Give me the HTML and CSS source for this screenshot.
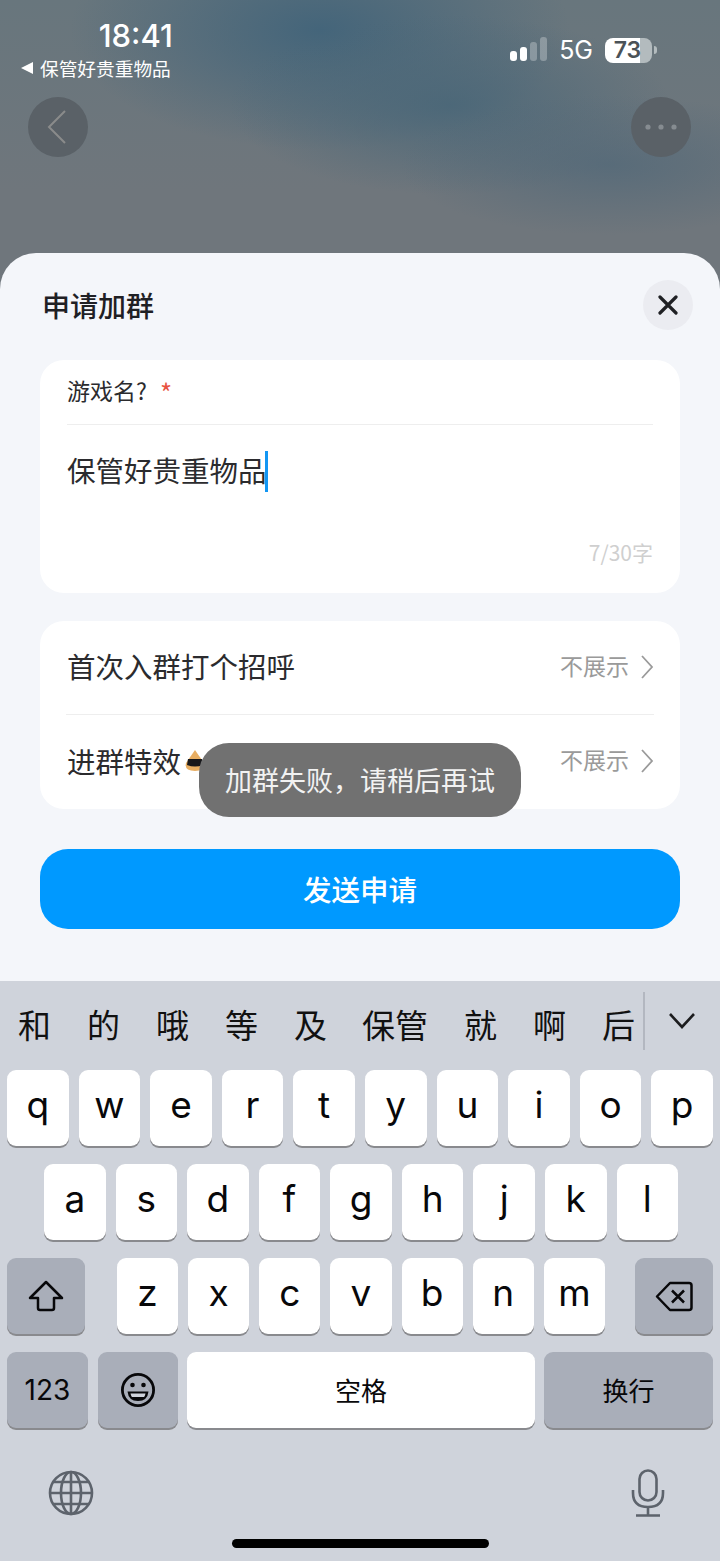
FILE: index.html
```html
<!DOCTYPE html>
<html lang="zh-CN">
<head>
    <meta charset="UTF-8">
    <meta name="viewport" content="width=device-width, initial-scale=1.0">
    <title>申请加群</title>
    <link rel="stylesheet" href="styles.css">
</head>
<body>
    <div class="page">
        <div class="top">
            <div class="status-bar">
                <div class="status-left">
                    <div class="time">18:41</div>
                    <div class="back-app"><span class="back-tri"></span>保管好贵重物品</div>
                </div>
                <div class="status-right">
                    <div class="signal">
                        <span class="bar b1"></span>
                        <span class="bar b2"></span>
                        <span class="bar b3 dim"></span>
                        <span class="bar b4 dim"></span>
                    </div>
                    <span class="net">5G</span>
                    <div class="battery"><span class="battery-num">73</span></div>
                    <span class="battery-nub"></span>
                </div>
            </div>
            <div class="nav">
                <div class="nav-btn">
                    <svg width="22" height="36" viewBox="0 0 22 36"><path d="M18 2 L2 18 L18 34" fill="none" stroke="#8a8b8b" stroke-width="2"/></svg>
                </div>
                <div class="nav-btn">
                    <svg width="34" height="8" viewBox="0 0 34 8"><circle cx="4" cy="4" r="2.6" fill="#868c91"/><circle cx="17" cy="4" r="2.6" fill="#868c91"/><circle cx="30" cy="4" r="2.6" fill="#868c91"/></svg>
                </div>
            </div>
        </div>

        <div class="sheet">
            <div class="sheet-head">
                <div class="sheet-title">申请加群</div>
                <div class="close">
                    <svg width="20" height="20" viewBox="0 0 20 20"><path d="M2 2 L18 18 M18 2 L2 18" stroke="#1f2024" stroke-width="3.2" stroke-linecap="round"/></svg>
                </div>
            </div>

            <div class="card card-input">
                <div class="field-label">游戏名?<span class="required">*</span></div>
                <div class="field-value">保管好贵重物品<span class="caret"></span></div>
                <div class="counter">7/30字</div>
            </div>

            <div class="card card-list">
                <div class="row">
                    <div class="row-name">首次入群打个招呼</div>
                    <div class="row-side">不展示
                        <svg width="14" height="24" viewBox="0 0 14 24"><path d="M2 1 L12 12 L2 23" fill="none" stroke="#9a9a9a" stroke-width="1.8"/></svg>
                    </div>
                </div>
                <div class="row">
                    <div class="row-name">进群特效
                        <svg class="row-emoji" width="22" height="23" viewBox="0 0 22 23"><path d="M11 1 L20 14 Q22 22 11 22 Q0 22 2 14 Z" fill="#e8ae62"/><path d="M4 10 H18 L19 16 Q11 19 3 16 Z" fill="#17171a"/></svg>
                    </div>
                    <div class="row-side">不展示
                        <svg width="14" height="24" viewBox="0 0 14 24"><path d="M2 1 L12 12 L2 23" fill="none" stroke="#9a9a9a" stroke-width="1.8"/></svg>
                    </div>
                </div>
            </div>

            <div class="submit">发送申请</div>

            <div class="toast">加群失败&#xFF0C;请稍后再试</div>
        </div>

        <div class="keyboard">
            <div class="candidates">
                <div class="cand-list">
                    <span>和</span><span>的</span><span>哦</span><span>等</span><span>及</span><span>保管</span><span>就</span><span>啊</span><span>后</span>
                </div>
                <div class="cand-more">
                    <svg width="28" height="18" viewBox="0 0 28 18"><path d="M2 2 L14 15 L26 2" fill="none" stroke="#1c1c1e" stroke-width="2.6"/></svg>
                </div>
            </div>

            <div class="keys">
                <div class="key-row row-q">
                    <div class="key">q</div><div class="key">w</div><div class="key">e</div><div class="key">r</div><div class="key">t</div><div class="key">y</div><div class="key">u</div><div class="key">i</div><div class="key">o</div><div class="key">p</div>
                </div>
                <div class="key-row row-a">
                    <div class="key">a</div><div class="key">s</div><div class="key">d</div><div class="key">f</div><div class="key">g</div><div class="key">h</div><div class="key">j</div><div class="key">k</div><div class="key">l</div>
                </div>
                <div class="key-row row-z">
                    <div class="key fn key-shift">
                        <svg width="36" height="32" viewBox="0 0 36 32"><path d="M18 2 L34 18 H26 V28 Q26 30 24 30 H12 Q10 30 10 28 V18 H2 Z" fill="none" stroke="#08080a" stroke-width="2.5" stroke-linejoin="round"/></svg>
                    </div>
                    <div class="letters">
                        <div class="key">z</div><div class="key">x</div><div class="key">c</div><div class="key">v</div><div class="key">b</div><div class="key">n</div><div class="key">m</div>
                    </div>
                    <div class="key fn key-del">
                        <svg width="38" height="31" viewBox="0 0 38 31"><path d="M2 15.5 L15 2 H34 Q36.5 2 36.5 4.5 V26.5 Q36.5 29 34 29 H15 Z" fill="none" stroke="#08080a" stroke-width="2.5" stroke-linejoin="round"/><path d="M17 9.5 L29 21.5 M29 9.5 L17 21.5" stroke="#08080a" stroke-width="2.5"/></svg>
                    </div>
                </div>
                <div class="key-row row-space">
                    <div class="key fn key-num">123</div>
                    <div class="key fn key-emoji">
                        <svg width="36" height="36" viewBox="0 0 36 36"><circle cx="18" cy="18" r="15.6" fill="none" stroke="#08080a" stroke-width="2.8"/><circle cx="12.5" cy="13" r="2.3" fill="#08080a"/><circle cx="23.5" cy="13" r="2.3" fill="#08080a"/><path d="M7.5 19.5 H28.5 Q27.5 29 18 29 Q8.5 29 7.5 19.5 Z" fill="#08080a"/><path d="M10.5 21.5 H25.5 Q25 24 24 25 H12 Q11 24 10.5 21.5 Z" fill="#cfd3db"/></svg>
                    </div>
                    <div class="key key-cjk key-spacebar">空格</div>
                    <div class="key fn key-cjk key-return">换行</div>
                </div>
            </div>

            <div class="kb-bottom">
                <svg class="globe" width="46" height="46" viewBox="0 0 46 46" fill="none" stroke="#5d636c" stroke-width="2.6"><circle cx="23" cy="23" r="21"/><ellipse cx="23" cy="23" rx="10" ry="21"/><path d="M23 2 V44 M2 23 H44 M6 12 H40 M6 34 H40"/></svg>
                <svg width="34" height="48" viewBox="0 0 34 48" fill="none" stroke="#5d636c" stroke-width="2.6"><rect x="8.5" y="1.5" width="17" height="30" rx="8.5"/><path d="M2 21 V24 Q2 38 17 38 Q32 38 32 24 V21 M17 38 V46 M5 46.5 H29"/></svg>
            </div>
            <div class="home-bar"></div>
        </div>
    </div>
</body>
</html>
```

FILE: styles.css
```css
* {
    box-sizing: border-box;
}
body {
    margin: 0;
    font-family: "Noto Sans CJK SC", sans-serif;
    color: #1f2024;
}

.page {
    position: relative;
    width: 720px;
    height: 1561px;
    overflow: hidden;
    background:
        radial-gradient(ellipse 210px 70px at 610px 165px, rgba(79, 103, 120, 0.7), rgba(79, 103, 120, 0)),
        radial-gradient(ellipse 220px 90px at 450px 105px, rgba(72, 102, 120, 0.85), rgba(72, 102, 120, 0)),
        radial-gradient(ellipse 250px 120px at 320px 30px, rgba(66, 100, 122, 0.95), rgba(66, 100, 122, 0)),
        linear-gradient(180deg, #68767d 0, #6f767c 190px, #6f767c 290px);
}

/* status bar + nav */
.top {
    height: 253px;
    color: #fff;
}
.status-bar {
    display: flex;
    justify-content: space-between;
    height: 97px;
    padding: 18px 63px 0 21px;
}
.status-left {
    display: flex;
    flex-direction: column;
    align-items: flex-end;
}
.time {
    margin-right: -2px;
    font-family: Inter, sans-serif;
    font-size: 31px;
    font-weight: 500;
    line-height: 36px;
}
.back-app {
    display: flex;
    align-items: center;
    font-size: 18.7px;
    line-height: 28px;
}
.back-tri {
    width: 0;
    height: 0;
    margin-right: 7px;
    border-top: 6.5px solid transparent;
    border-bottom: 6.5px solid transparent;
    border-right: 12px solid #fff;
}
.status-right {
    display: flex;
    align-items: center;
    height: 44px;
    margin-top: 10px;
}
.signal {
    display: flex;
    align-items: flex-end;
    gap: 3px;
    height: 24px;
    margin-top: -3px;
}
.bar {
    width: 7px;
    border-radius: 3px;
    background: #fff;
}
.bar.dim {
    background: rgba(255, 255, 255, 0.28);
}
.b1 { height: 10px; }
.b2 { height: 14px; }
.b3 { height: 19px; }
.b4 { height: 24px; }
.net {
    margin-left: 12px;
    font-family: Inter, sans-serif;
    font-size: 25px;
    line-height: 28px;
}
.battery {
    display: flex;
    align-items: center;
    justify-content: center;
    width: 47px;
    height: 25px;
    margin-left: 12px;
    padding-right: 2px;
    border-radius: 8px;
    background: linear-gradient(90deg, #fff 0, #fff 74%, #b3bbbe 74%);
}
.battery-num {
    font-family: Inter, sans-serif;
    font-size: 23px;
    font-weight: 600;
    color: #4b5257;
}
.battery-nub {
    width: 3px;
    height: 8px;
    margin-left: 2px;
    border-radius: 0 3px 3px 0;
    background: #b3bbbe;
}
.nav {
    display: flex;
    justify-content: space-between;
    padding: 0 29px 0 28px;
}
.nav-btn {
    display: flex;
    align-items: center;
    justify-content: center;
    width: 60px;
    height: 60px;
    border-radius: 50%;
    background: #5a6167;
}

/* sheet */
.sheet {
    position: relative;
    height: 728px;
    padding: 0 40px;
    border-radius: 36px 36px 0 0;
    background: #f4f6fa;
}
.sheet-head {
    display: flex;
    justify-content: space-between;
    align-items: flex-start;
    height: 107px;
    padding: 25px 0 0 2px;
}
.sheet-title {
    font-size: 28px;
    font-weight: 500;
    line-height: 54px;
}
.close {
    display: flex;
    align-items: center;
    justify-content: center;
    width: 50px;
    height: 50px;
    margin-top: 2px;
    margin-right: -13px;
    border-radius: 50%;
    background: #ebecf1;
}
.card {
    border-radius: 24px;
    background: #fff;
}
.card-input {
    height: 233px;
    padding: 0 27px;
}
.field-label {
    height: 65px;
    padding-top: 14px;
    border-bottom: 1px solid #eeeeee;
    font-size: 23px;
    line-height: 32px;
    color: #2b2b2e;
}
.required {
    margin-left: 13px;
    font-size: 26px;
    line-height: 26px;
    vertical-align: -3px;
    color: #e8533f;
}
.field-value {
    display: flex;
    align-items: center;
    height: 46px;
    margin-top: 21px;
    font-size: 28.5px;
    color: #2b2b2e;
}
.caret {
    width: 3px;
    height: 41px;
    margin-top: 5px;
    margin-left: -2px;
    background: #1296f3;
}
.counter {
    margin-top: 45px;
    font-size: 21px;
    line-height: 30px;
    text-align: right;
    color: #cfcfcf;
}
.card-list {
    height: 188px;
    margin-top: 28px;
    padding: 0 26px 0 27px;
}
.row {
    display: flex;
    justify-content: space-between;
    align-items: center;
    height: 93px;
    padding-bottom: 4px;
}
.row + .row {
    height: 95px;
    border-top: 1px solid #eeeeee;
    margin-left: -1px;
}
.row-name {
    display: flex;
    align-items: center;
    font-size: 28.5px;
    color: #2b2b2e;
}
.row + .row .row-name {
    margin-left: 1px;
}
.row-emoji {
    margin-left: 3px;
}
.row-side {
    display: flex;
    align-items: center;
    gap: 11px;
    padding-bottom: 2px;
    font-size: 23px;
    color: #9a9a9a;
}
.row-side svg {
    margin-top: 4px;
}
.submit {
    display: flex;
    align-items: center;
    justify-content: center;
    height: 80px;
    margin-top: 40px;
    padding-bottom: 2px;
    border-radius: 28px;
    background: #0099ff;
    color: #fff;
    font-size: 28.5px;
    font-weight: 500;
}
.toast {
    position: absolute;
    left: 199px;
    top: 490px;
    display: flex;
    align-items: center;
    justify-content: center;
    width: 322px;
    height: 74px;
    padding-bottom: 2px;
    border-radius: 30px;
    background: #717171;
    color: #f2f2f2;
    font-size: 27px;
}

/* keyboard */
.keyboard {
    position: relative;
    height: 580px;
    background: #cfd3db;
}
.candidates {
    display: flex;
    height: 89px;
}
.cand-list {
    display: flex;
    gap: 36px;
    width: 645px;
    height: 58px;
    margin-top: 11px;
    padding: 10px 0 0 18px;
    border-right: 2px solid #b3b7c0;
    font-size: 33px;
    line-height: 44px;
    color: #111;
}
.cand-list span:nth-child(6) {
    margin-left: -1px;
}
.cand-more {
    padding: 30px 0 0 23px;
}
.keys {
    display: flex;
    flex-direction: column;
    gap: 18px;
}
.key-row {
    display: flex;
    gap: 10px;
    height: 76px;
    padding: 0 7px;
}
.row-a {
    padding: 0 42px 0 44px;
}
.row-z {
    gap: 0;
}
.letters {
    display: flex;
    gap: 10px;
    width: 488px;
    margin: 0 30px 0 32px;
}
.row-space {
    gap: 9px;
}
.key {
    display: flex;
    flex: 1;
    align-items: center;
    justify-content: center;
    padding-bottom: 7px;
    border-radius: 9px;
    background: #fff;
    box-shadow: 0 2px 0 #898a8e;
    font-family: Inter, sans-serif;
    font-size: 37px;
    color: #08080a;
}
.key.fn {
    background: #a9aeb9;
}
.key-shift, .key-del {
    flex: none;
    width: 78px;
    padding-bottom: 0;
}
.key-num {
    flex: none;
    width: 81px;
    font-size: 28px;
    padding-bottom: 0;
}
.key-emoji {
    flex: none;
    width: 80px;
    margin-left: 1px;
    padding-bottom: 0;
}
.key-cjk {
    font-family: "Noto Sans CJK SC", sans-serif;
    font-size: 26px;
    padding-bottom: 2px;
}
.key-spacebar {
    flex: none;
    width: 348px;
}
.key-return {
    flex: none;
    width: 169px;
}
.kb-bottom {
    display: flex;
    justify-content: space-between;
    align-items: flex-start;
    padding: 41px 55px 0 48px;
}
.globe {
    margin-top: 1px;
}
.home-bar {
    position: absolute;
    left: 232px;
    top: 558px;
    width: 257px;
    height: 9px;
    border-radius: 5px;
    background: #000;
}
```
